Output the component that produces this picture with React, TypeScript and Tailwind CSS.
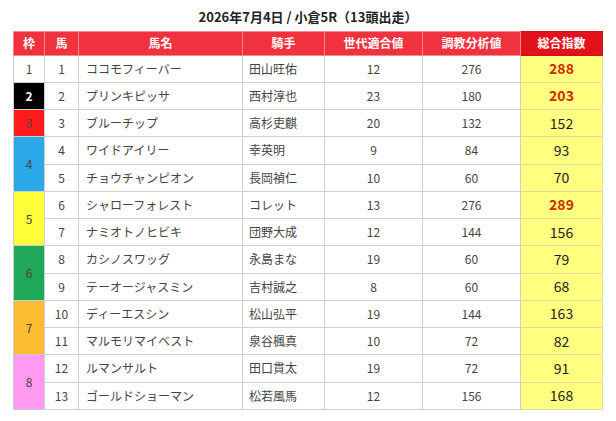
import React from "react";

type Row = { waku: number; uma: number; name: string; jockey: string; sedai: number; chokyo: number; total: number };

const rows: Row[] = [
  { waku: 1, uma: 1, name: "ココモフィーバー", jockey: "田山旺佑", sedai: 12, chokyo: 276, total: 288 },
  { waku: 2, uma: 2, name: "プリンキピッサ", jockey: "西村淳也", sedai: 23, chokyo: 180, total: 203 },
  { waku: 3, uma: 3, name: "ブルーチップ", jockey: "高杉吏麒", sedai: 20, chokyo: 132, total: 152 },
  { waku: 4, uma: 4, name: "ワイドアイリー", jockey: "幸英明", sedai: 9, chokyo: 84, total: 93 },
  { waku: 4, uma: 5, name: "チョウチャンピオン", jockey: "長岡禎仁", sedai: 10, chokyo: 60, total: 70 },
  { waku: 5, uma: 6, name: "シャローフォレスト", jockey: "コレット", sedai: 13, chokyo: 276, total: 289 },
  { waku: 5, uma: 7, name: "ナミオトノヒビキ", jockey: "団野大成", sedai: 12, chokyo: 144, total: 156 },
  { waku: 6, uma: 8, name: "カシノスワッグ", jockey: "永島まな", sedai: 19, chokyo: 60, total: 79 },
  { waku: 6, uma: 9, name: "テーオージャスミン", jockey: "吉村誠之", sedai: 8, chokyo: 60, total: 68 },
  { waku: 7, uma: 10, name: "ディーエスシン", jockey: "松山弘平", sedai: 19, chokyo: 144, total: 163 },
  { waku: 7, uma: 11, name: "マルモリマイベスト", jockey: "泉谷楓真", sedai: 10, chokyo: 72, total: 82 },
  { waku: 8, uma: 12, name: "ルマンサルト", jockey: "田口貫太", sedai: 19, chokyo: 72, total: 91 },
  { waku: 8, uma: 13, name: "ゴールドショーマン", jockey: "松若風馬", sedai: 12, chokyo: 156, total: 168 },
];

// 枠ごとの色（背景・文字）
const wakuStyle: Record<number, string> = {
  1: "bg-white text-[#333]",
  2: "bg-black text-white font-bold",
  3: "bg-[#ff1b1b] text-[#8c0a0a]",
  4: "bg-[#2aa8e8] text-[#175a80]",
  5: "bg-[#ffff3a] text-[#6a6a30]",
  6: "bg-[#20a85a] text-[#0f5a30]",
  7: "bg-[#fcbc33] text-[#7a5a12]",
  8: "bg-[#ff99f2] text-[#8a3a90]",
};

const th = "border border-[#f08a90] bg-[#f0323e] text-white font-bold text-[12px] text-center";
const td = "border border-[#cfcfcf] text-[12px] text-[#444]";

export default function App() {
  return (
    <div className="min-h-screen bg-white pt-[8px] font-['Noto_Sans_CJK_JP','Noto_Sans',sans-serif]">
      <h2 className="mb-[5px] text-center text-[13px] font-bold leading-[18px] text-[#222]">
        2026年7月4日 / 小倉5R（13頭出走）
      </h2>
      <table className="mx-auto w-[589px] table-fixed border-collapse">
        <colgroup>
          <col className="w-[31px]" />
          <col className="w-[34px]" />
          <col className="w-[164px]" />
          <col className="w-[82px]" />
          <col className="w-[98px]" />
          <col className="w-[98px]" />
          <col className="w-[82px]" />
        </colgroup>
        <thead>
          <tr className="h-[23.5px]">
            <th className={th}>枠</th>
            <th className={th}>馬</th>
            <th className={th}>馬名</th>
            <th className={th}>騎手</th>
            <th className={th}>世代適合値</th>
            <th className={th}>調教分析値</th>
            <th className="border border-[#d01018] bg-[#e2121c] text-center text-[12px] font-bold text-white">総合指数</th>
          </tr>
        </thead>
        <tbody>
          {rows.map((r, i) => {
            const first = i === 0 || rows[i - 1].waku !== r.waku;
            const span = rows.filter((x) => x.waku === r.waku).length;
            const high = r.total >= 200;
            return (
              <tr key={r.uma} className="h-[27.25px]">
                {first && (
                  <td rowSpan={span} className={`${td} text-center ${wakuStyle[r.waku]}`}>
                    {r.waku}
                  </td>
                )}
                <td className={`${td} text-center`}>{r.uma}</td>
                <td className={`${td} pl-[7px]`}>{r.name}</td>
                <td className={`${td} pl-[6px]`}>{r.jockey}</td>
                <td className={`${td} text-center`}>{r.sedai}</td>
                <td className={`${td} text-center`}>{r.chokyo}</td>
                <td
                  className={`border border-[#dcdca0] bg-[#ffff80] text-center text-[14px] ${
                    high ? "font-bold text-[#d22a00]" : "text-[#222]"
                  }`}
                >
                  {r.total}
                </td>
              </tr>
            );
          })}
        </tbody>
      </table>
    </div>
  );
}
